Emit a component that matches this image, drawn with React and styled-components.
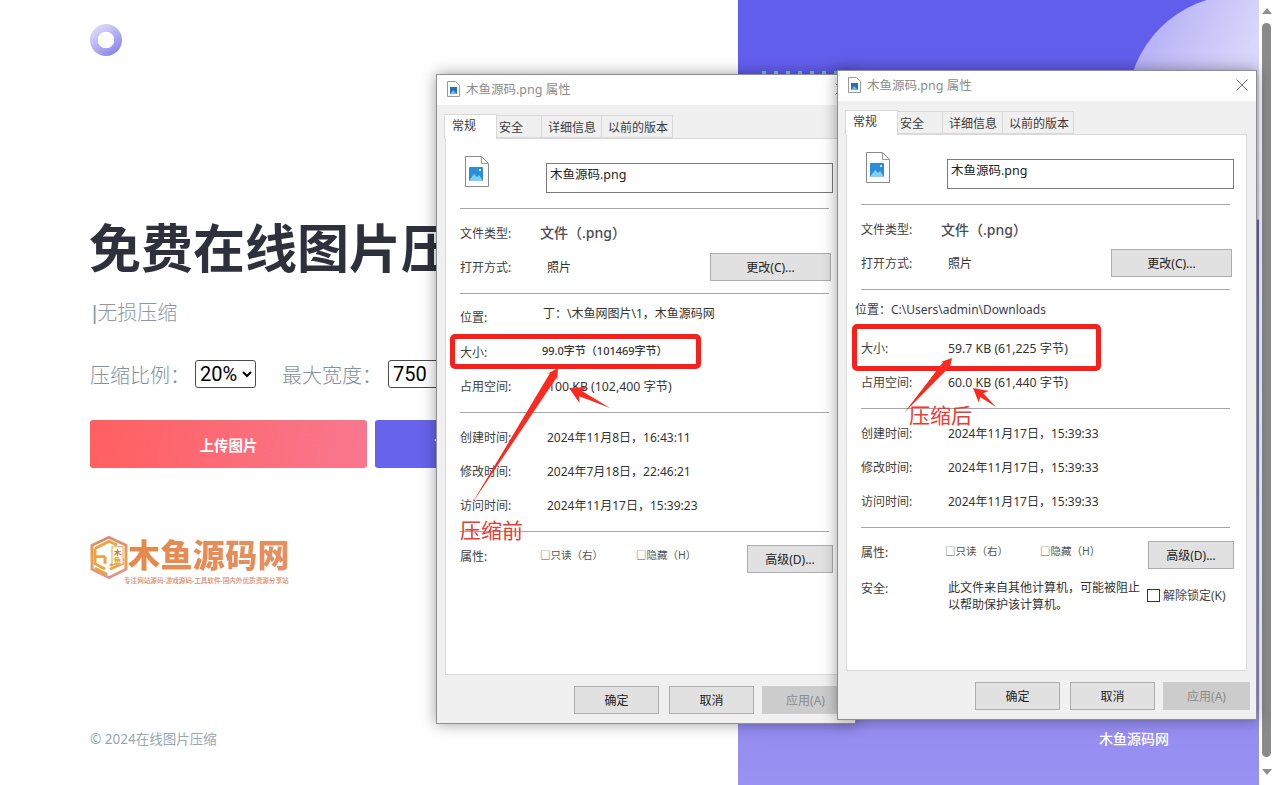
import styled, { createGlobalStyle } from "styled-components";

const cjk = `"Noto Sans", "Noto Sans CJK SC", sans-serif`;

const Global = createGlobalStyle`
    html, body {
        margin: 0;
        padding: 0;
        background: #fff;
    }
    * {
        box-sizing: border-box;
    }
`;

const Page = styled.div`
    position: relative;
    display: flex;
    width: 1274px;
    height: 785px;
    overflow: hidden;
    font-family: ${cjk};
`;

const Left = styled.main`
    width: 738px;
    display: flex;
    flex-direction: column;
    padding: 24px 0 0 90px;
    overflow: hidden;
`;

const Ring = styled.div`
    width: 32px;
    height: 32px;
    flex: none;
    border-radius: 50%;
    background: radial-gradient(circle at center, #fff 0 8px, transparent 8.6px),
        linear-gradient(145deg, #e0def9 10%, #b5b1f3 50%, #8781ec 90%);
`;

const Heading = styled.h1`
    margin: 160px 0 0 -1px;
    font-size: 52px;
    line-height: 64px;
    font-weight: 700;
    color: #2e303c;
    white-space: nowrap;
`;

const Sub = styled.div`
    margin-top: 17px;
    font-family: "Liberation Sans", "Noto Sans CJK SC", sans-serif;
    font-size: 20px;
    line-height: 32px;
    color: #8b97a3;
    font-weight: 300;
    padding-left: 2px;
`;

const Options = styled.div`
    display: flex;
    align-items: center;
    margin-top: 27px;
    height: 36px;
    white-space: nowrap;
`;

const OptionLabel = styled.label`
    font-size: 20px;
    color: #84919e;
    font-weight: 300;
    width: ${(p) => p.$width}px;
    flex: none;
`;

const Select = styled.select`
    font-family: "Roboto", "Liberation Sans", sans-serif;
    font-size: 20px;
    height: 28px;
    width: ${(p) => p.$width}px;
    flex: none;
    padding: 0;
    border: 1px solid #4b4b4b;
    border-radius: 3px;
    background: #fff;
    color: #000;
    margin-right: ${(p) => p.$gap || 0}px;
`;

const Actions = styled.div`
    display: flex;
    gap: 8px;
    margin-top: 28px;
`;

const ActionButton = styled.button`
    width: ${(p) => p.$width}px;
    height: 48px;
    border: 0;
    border-radius: 3px;
    color: #fff;
    font-family: ${cjk};
    font-size: 14.5px;
    font-weight: 700;
    background: ${(p) => p.$bg};
`;

const Brand = styled.div`
    display: flex;
    align-items: flex-start;
    margin-top: 68px;
    height: 50px;
`;

const BrandText = styled.div`
    display: flex;
    flex-direction: column;
`;

const BrandName = styled.div`
    font-size: 32px;
    line-height: 34px;
    margin-top: 2px;
    letter-spacing: 0.4px;
    font-weight: 900;
    white-space: nowrap;
    background: linear-gradient(90deg, #e8884a, #e49063);
    -webkit-background-clip: text;
    background-clip: text;
    color: transparent;
`;

const BrandSlogan = styled.div`
    font-size: 6.6px;
    line-height: 9px;
    font-weight: 500;
    color: #d98a6c;
    white-space: nowrap;
    margin: 4px 0 0 -4px;
`;

const Copy = styled.footer`
    margin-top: auto;
    margin-bottom: 37px;
    font-size: 13.5px;
    line-height: 18px;
    color: #9aa6b2;
`;

const Right = styled.aside`
    position: relative;
    width: 521px;
    background: linear-gradient(180deg, #625eec 0%, #625eec 30%, #9a92f1 100%);
    overflow: hidden;
`;

const Circle = styled.div`
    position: absolute;
    left: 389px;
    top: -5px;
    width: 226px;
    height: 226px;
    border-radius: 50%;
    background: linear-gradient(115deg, #aaa5f3 0%, #d9d6fb 45%, #e3e1fc 100%);
`;

const Dots = styled.div`
    position: absolute;
    left: 24px;
    top: 71px;
    width: 76px;
    height: 4px;
    background: repeating-linear-gradient(90deg, #7ec3ee 0 4px, transparent 4px 12px);
`;

const RightCaption = styled.div`
    position: absolute;
    left: 361px;
    top: 730px;
    font-size: 14px;
    line-height: 18px;
    font-weight: 500;
    color: #fff;
`;

const Scrollbar = styled.div`
    width: 15px;
    display: flex;
    flex-direction: column;
    align-items: center;
    background: #fff;
    padding-top: 8px;
`;

const ScrollArrow = styled.div`
    width: 0;
    height: 0;
    flex: none;
    border-left: 5px solid transparent;
    border-right: 5px solid transparent;
    border-${(p) => (p.$up ? "bottom" : "top")}: 6px solid #8f8f8f;
`;

const ScrollThumb = styled.div`
    width: 9px;
    height: 734px;
    margin: 9px 0 12px;
    border-radius: 5px;
    background: #8a8a8a;
`;

const Win = styled.section`
    position: absolute;
    left: ${(p) => p.$x}px;
    top: ${(p) => p.$y}px;
    width: 420px;
    height: 650px;
    display: flex;
    flex-direction: column;
    background: #f0f0f0;
    border: 1px solid #8e8e8e;
    box-shadow: 0 0 14px rgba(0, 0, 0, 0.38);
    font-size: 12px;
    color: #333;
`;

const TitleBar = styled.header`
    height: 30px;
    flex: none;
    display: flex;
    align-items: center;
    background: #fff;
    padding: 0 8px 3px 10px;
    gap: 6px;
    color: #8c8c8c;
    font-size: 12.5px;
`;

const TitleText = styled.span`
    flex: 1;
`;

const Close = styled.svg`
    width: 12px;
    height: 12px;
    stroke: #777;
    stroke-width: 1;
    fill: none;
`;

const Tabs = styled.nav`
    display: flex;
    align-items: flex-end;
    height: 33px;
    flex: none;
    padding-left: 8px;
`;

const Tab = styled.div`
    display: flex;
    align-items: center;
    width: ${(p) => p.$width}px;
    height: ${(p) => (p.$active ? 25 : 23)}px;
    border: 1px solid #d9d9d9;
    background: ${(p) => (p.$active ? "#fff" : "#f0f0f0")};
    border-bottom: ${(p) => (p.$active ? "0" : "1px solid #d9d9d9")};
    margin-left: -1px;
    margin-bottom: ${(p) => (p.$active ? -1 : 0)}px;
    position: relative;
    padding: 0 0 ${(p) => (p.$active ? 4 : 0)}px ${(p) => p.$pad}px;
    z-index: ${(p) => (p.$active ? 1 : 0)};
    color: #3a3a3a;
    white-space: nowrap;
`;

const Panel = styled.div`
    height: 537px;
    flex: none;
    margin: 0 9px 0 8px;
    padding: 0 16px 0 14px;
    background: #fff;
    border: 1px solid #d9d9d9;
`;

const FileHead = styled.div`
    display: flex;
    height: 69px;
    padding: 17px 0 0 5px;
`;

const FileIcon = styled.svg`
    width: 24px;
    height: 31px;
    flex: none;
`;

const NameBox = styled.div`
    width: 287px;
    height: 30px;
    margin: 7px -2px 0 57px;
    flex: none;
    border: 1px solid #7a7a7a;
    padding: 1px 3px;
    font-size: 12.5px;
    line-height: 20px;
    color: #222;
`;

const Divider = styled.hr`
    margin: 0;
    border: 0;
    height: 1px;
    background: #a6a6a6;
`;

const Section = styled.div`
    padding: ${(p) => p.$top ?? 7}px 0 0;
    height: ${(p) => p.$height}px;
`;

const Row = styled.div`
    display: flex;
    align-items: center;
    height: 34px;
    margin-top: ${(p) => p.$mt || 0}px;
    margin-left: ${(p) => p.$ml || 0}px;
`;

const Label = styled.span`
    width: ${(p) => p.$width || 80}px;
    flex: none;
    color: #404040;
    padding-top: ${(p) => p.$drop || 0}px;
`;

const Value = styled.span`
    padding-left: ${(p) => p.$indent ?? 7}px;
    padding-bottom: ${(p) => p.$lift || 0}px;
    font-size: ${(p) => p.$size || 12}px;
    font-weight: ${(p) => p.$weight || 400};
    color: ${(p) => p.$color || "#333"};
    white-space: nowrap;
`;

const Flag = styled.span`
    width: ${(p) => p.$width}px;
    flex: none;
    color: #555;
    font-size: 10.5px;
    padding-bottom: 3px;
    white-space: nowrap;
`;

const WinButton = styled.button`
    width: ${(p) => p.$width || 86}px;
    height: 28px;
    flex: none;
    margin-left: ${(p) => (p.$push ? "auto" : "0")};
    margin-right: ${(p) => p.$mr || 0}px;
    margin-top: ${(p) => p.$mt || 0}px;
    padding: 0;
    border: 1px solid ${(p) => (p.$off ? "#cfcfcf" : "#adadad")};
    background: ${(p) => (p.$off ? "#cccccc" : "#e1e1e1")};
    color: ${(p) => (p.$off ? "#8b8b8b" : "#222")};
    font-family: ${cjk};
    font-size: 12px;
`;

const Notice = styled.div`
    display: flex;
    align-items: flex-start;
    margin-top: 10px;
`;

const NoticeText = styled.div`
    width: 206px;
    flex: none;
    padding-left: 7px;
    line-height: 17px;
    color: #333;
    font-size: 12px;
`;

const Unblock = styled.div`
    display: flex;
    align-items: center;
    gap: 3px;
    margin: 7px 0 0 0;
    color: #444;
    white-space: nowrap;
`;

const Tick = styled.span`
    width: 13px;
    height: 13px;
    flex: none;
    border: 1px solid #333;
`;

const Footer = styled.div`
    display: flex;
    justify-content: flex-end;
    gap: 10px;
    padding: 11px 6px 0 0;
`;

const Overlay = styled.svg`
    position: absolute;
    left: -1px;
    top: -1px;
    width: 420px;
    height: 650px;
    pointer-events: none;
    overflow: visible;
`;

const RedBox = styled.div`
    position: absolute;
    left: ${(p) => p.$x}px;
    top: ${(p) => p.$y}px;
    width: ${(p) => p.$w}px;
    height: ${(p) => p.$h}px;
    border: 5px solid #fb1f1c;
    border-radius: 5px;
    pointer-events: none;
`;

const Note = styled.div`
    position: absolute;
    left: ${(p) => p.$x}px;
    top: ${(p) => p.$y}px;
    font-size: 21px;
    line-height: 26px;
    color: #ec3a34;
    white-space: nowrap;
`;

const ArrowPath = ({ tail, tip, width, head }) => {
    // long tapered annotation arrow, tail is a point and the head is a barbed triangle
    const dx = tip[0] - tail[0];
    const dy = tip[1] - tail[1];
    const len = Math.hypot(dx, dy);
    const ux = dx / len;
    const uy = dy / len;
    const nx = -uy;
    const ny = ux;
    const at = (along, side) => [
        tip[0] - ux * along + nx * side,
        tip[1] - uy * along + ny * side,
    ].join(",");
    const points = [
        tail.join(","),
        at(head * 0.8, width / 2),
        at(head, head * 0.55),
        tip.join(","),
        at(head, -head * 0.55),
        at(head * 0.8, -width / 2),
    ].join(" ");
    return <polygon points={points} fill="#fb2a20" />;
};

const PngIcon = () => (
    <FileIcon viewBox="0 0 24 31">
        <path d="M.5.5h16l7 7v23H.5z" fill="#fff" stroke="#8a8a8a" />
        <path d="M16.5.5v7h7" fill="none" stroke="#9a9a9a" />
        <rect x="4" y="11" width="14" height="14" rx="1" fill="#2b8fd8" />
        <path d="M4 25l5-7 3 3 2-2 4 6z" fill="#7fd0f5" />
        <circle cx="15" cy="14" r="1" fill="#fff" />
    </FileIcon>
);

const TitleIcon = () => (
    <svg width="13" height="16" viewBox="0 0 13 16">
        <path d="M.5.5h8l4 4v11H.5z" fill="#fff" stroke="#999" />
        <rect x="3" y="6" width="7" height="7" fill="#2a6fa8" />
        <path d="M3 13l3-4 4 4z" fill="#6cb8e6" />
    </svg>
);

const HexLogo = () => (
    <svg width="38" height="43" viewBox="0 0 38 48" preserveAspectRatio="none" style={{ flex: "none" }}>
        <defs>
            <linearGradient id="hexFill" x1="0" y1="0" x2="0" y2="1">
                <stop offset="0" stopColor="#d98a72" />
                <stop offset="0.55" stopColor="#eda344" />
                <stop offset="1" stopColor="#dc8fa0" />
            </linearGradient>
        </defs>
        <path d="M19 1.5L36 10.5V37L19 46.5L2 37V10.5Z" fill="#fff" stroke="url(#hexFill)" strokeWidth="3" />
        <path d="M5 14L19 6L27 10M5 14V23H15M5 23V31L15 37M15 23V31M5 36L17 43M20 37L34 30M20 33L34 26" fill="none" stroke="#eda344" strokeWidth="3" />
        <rect x="22" y="12" width="11" height="20" fill="#fff" stroke="#e8a04c" />
        <text x="27.5" y="21" fontSize="8" fontWeight="700" textAnchor="middle" fill="#c5782f">木</text>
        <text x="27.5" y="30" fontSize="8" fontWeight="700" textAnchor="middle" fill="#e8a032">鱼</text>
    </svg>
);

function PropertiesWindow({ x, y, showNotice, data, arrows, box, note }) {
    return (
        <Win $x={x} $y={y}>
            <TitleBar>
                <TitleIcon />
                <TitleText>木鱼源码.png 属性</TitleText>
                <Close viewBox="0 0 12 12">
                    <path d="M.5.5l11 11M11.5.5l-11 11" />
                </Close>
            </TitleBar>
            <Tabs>
                <Tab $active $width={53} $pad={7}>常规</Tab>
                <Tab $width={46} $pad={2}>安全</Tab>
                <Tab $width={61} $pad={6}>详细信息</Tab>
                <Tab $width={72} $pad={6}>以前的版本</Tab>
            </Tabs>
            <Panel>
                <FileHead>
                    <PngIcon />
                    <NameBox>木鱼源码.png</NameBox>
                </FileHead>
                <Divider />
                <Section $height={84}>
                    <Row>
                        <Label>文件类型:</Label>
                        <Value $indent={0} $lift={data.typeLift} $size={14} $weight={500} $color="#4a4a55">文件（.png）</Value>
                    </Row>
                    <Row>
                        <Label>打开方式:</Label>
                        <Value>照片</Value>
                        <WinButton $push $width={121} $mr={-2} $mt={-1}>更改(C)...</WinButton>
                    </Row>
                </Section>
                <Divider />
                <Section $height={118} $top={2}>
                    {data.locInline ? (
                        <Row $ml={-6}>
                            <Value $indent={0} $color="#3c3c50">位置：C:\Users\admin\Downloads</Value>
                        </Row>
                    ) : (
                        <Row>
                            <Label $drop={8}>位置:</Label>
                            <Value $indent={3}>丁：\木鱼网图片\1，木鱼源码网</Value>
                        </Row>
                    )}
                    <Row $mt={5}>
                        <Label>大小:</Label>
                        <Value $indent={data.sizeIndent} $lift={data.sizeLift} $size={data.sizeFont} $weight={data.sizeWeight}>{data.size}</Value>
                    </Row>
                    <Row>
                        <Label>占用空间:</Label>
                        <Value $indent={data.spaceIndent} $size={12.3}>{data.space}</Value>
                    </Row>
                </Section>
                <Divider />
                <Section $height={118}>
                    <Row>
                        <Label>创建时间:</Label>
                        <Value>{data.created}</Value>
                    </Row>
                    <Row>
                        <Label>修改时间:</Label>
                        <Value>{data.modified}</Value>
                    </Row>
                    <Row>
                        <Label>访问时间:</Label>
                        <Value>{data.accessed}</Value>
                    </Row>
                </Section>
                <Divider />
                <Section $height={100}>
                    <Row>
                        <Label $width={data.flagLeft}>属性:</Label>
                        <Flag $width={data.flagGap}>□只读（右）</Flag>
                        <Flag $width={90}>□隐藏（H）</Flag>
                        <WinButton $push $mr={-4} $mt={6}>高级(D)...</WinButton>
                    </Row>
                    {showNotice && (
                        <Notice>
                            <Label>安全:</Label>
                            <NoticeText>此文件来自其他计算机，可能被阻止以帮助保护该计算机。</NoticeText>
                            <Unblock>
                                <Tick />
                                解除锁定(K)
                            </Unblock>
                        </Notice>
                    )}
                </Section>
            </Panel>
            <Footer>
                <WinButton $width={85}>确定</WinButton>
                <WinButton $width={85} $mr={-2}>取消</WinButton>
                <WinButton $width={87} $off>应用(A)</WinButton>
            </Footer>
            <RedBox $x={box.x} $y={box.y} $w={box.w} $h={box.h} />
            <Overlay viewBox="0 0 420 650">
                {arrows.map((a, i) => (
                    <ArrowPath key={i} {...a} />
                ))}
            </Overlay>
            <Note $x={note.x} $y={note.y}>{note.text}</Note>
        </Win>
    );
}

const before = {
    typeLift: 3,
    locInline: false,
    sizeIndent: 2,
    sizeLift: 4,
    sizeFont: 11,
    sizeWeight: 500,
    size: "99.0字节（101469字节）",
    spaceIndent: 8,
    space: "100 KB (102,400 字节)",
    created: "2024年11月8日，16:43:11",
    modified: "2024年7月18日，22:46:21",
    accessed: "2024年11月17日，15:39:23",
    flagLeft: 80,
    flagGap: 96,
};

const after = {
    typeLift: 0,
    locInline: true,
    sizeIndent: 7,
    sizeLift: 0,
    sizeFont: 12.3,
    sizeWeight: 400,
    size: "59.7 KB (61,225 字节)",
    spaceIndent: 7,
    space: "60.0 KB (61,440 字节)",
    created: "2024年11月17日，15:39:33",
    modified: "2024年11月17日，15:39:33",
    accessed: "2024年11月17日，15:39:33",
    flagLeft: 84,
    flagGap: 95,
};

export default function App() {
    return (
        <Page>
            <Global />
            <Left>
                <Ring />
                <Heading>免费在线图片压缩</Heading>
                <Sub>|无损压缩</Sub>
                <Options>
                    <OptionLabel $width={105}>压缩比例：</OptionLabel>
                    <Select $width={61} $gap={26} defaultValue="20%">
                        <option>20%</option>
                        <option>40%</option>
                        <option>60%</option>
                    </Select>
                    <OptionLabel $width={106}>最大宽度：</OptionLabel>
                    <Select $width={62} defaultValue="750">
                        <option>750</option>
                        <option>1080</option>
                    </Select>
                </Options>
                <Actions>
                    <ActionButton $width={277} $bg="linear-gradient(100deg, #ff5f5f, #f8788f)">上传图片</ActionButton>
                    <ActionButton $width={176} $bg="#6763ec">下载图片</ActionButton>
                </Actions>
                <Brand>
                    <HexLogo />
                    <BrandText>
                        <BrandName>木鱼源码网</BrandName>
                        <BrandSlogan>专注网站源码-游戏源码-工具软件-国内外优质资源分享站</BrandSlogan>
                    </BrandText>
                </Brand>
                <Copy>© 2024在线图片压缩</Copy>
            </Left>
            <Right>
                <Circle />
                <Dots />
                <RightCaption>木鱼源码网</RightCaption>
            </Right>
            <Scrollbar>
                <ScrollArrow $up />
                <ScrollThumb />
                <ScrollArrow />
            </Scrollbar>
            <PropertiesWindow
                x={436}
                y={74}
                data={before}
                box={{ x: 13, y: 259, w: 251, h: 35 }}
                note={{ x: 23, y: 442, text: "压缩前" }}
                arrows={[
                    { tail: [35, 431], tip: [122, 294], width: 8, head: 11 },
                    { tail: [174, 334], tip: [133, 314], width: 6, head: 16 },
                ]}
            />
            <PropertiesWindow
                x={837}
                y={70}
                showNotice
                data={after}
                box={{ x: 14, y: 253, w: 249, h: 47 }}
                note={{ x: 71, y: 331, text: "压缩后" }}
                arrows={[
                    { tail: [67, 343], tip: [115, 288], width: 8, head: 11 },
                    { tail: [159, 337], tip: [136, 318], width: 5, head: 14 },
                ]}
            />
        </Page>
    );
}
